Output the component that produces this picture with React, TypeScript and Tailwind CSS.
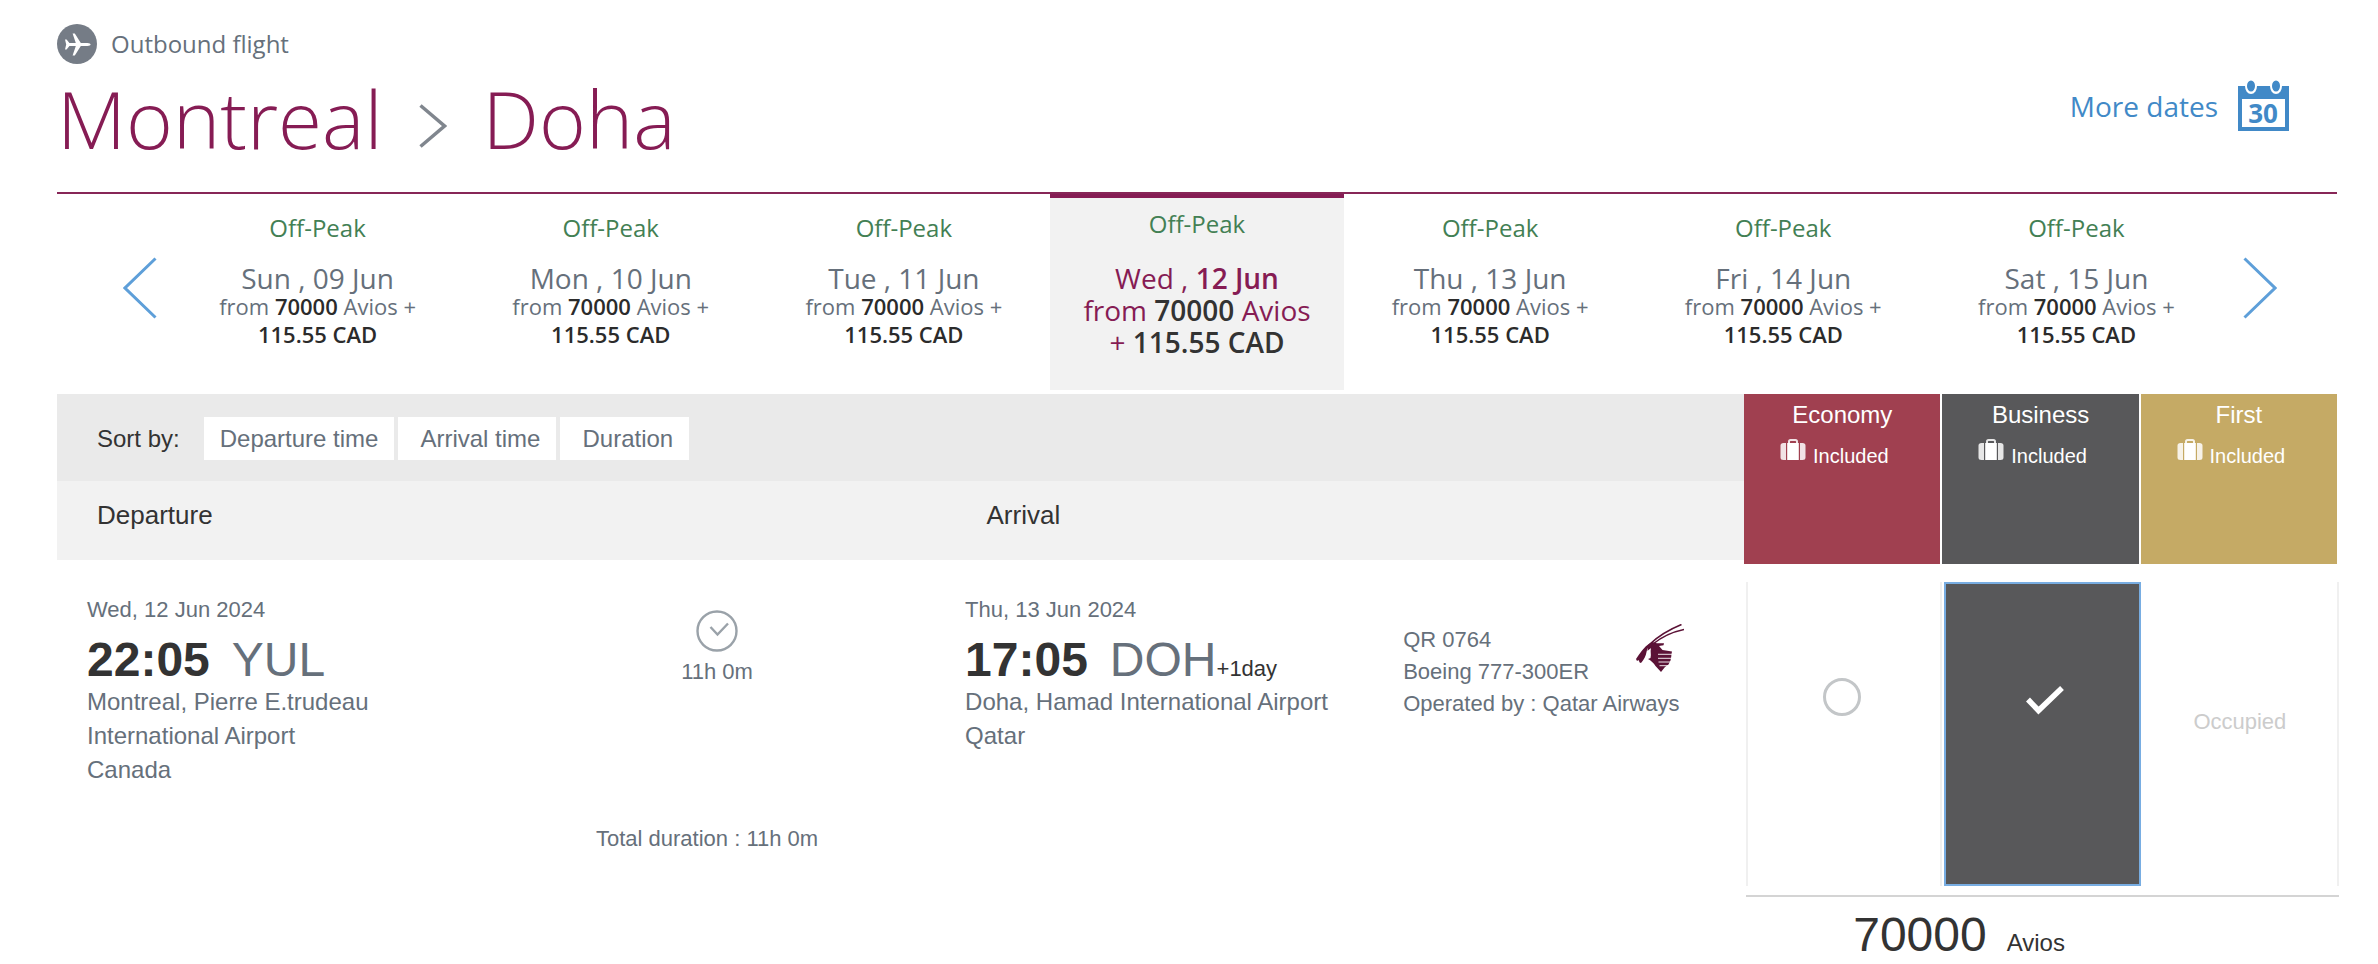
import React, { useState } from 'react';
import clsx from 'clsx';

interface Day {
  weekday: string;
  date: string;
}

interface Cabin {
  id: string;
  name: string;
  headerClass: string;
  available: boolean;
}

const days: Day[] = [
  { weekday: 'Sun', date: '09 Jun' },
  { weekday: 'Mon', date: '10 Jun' },
  { weekday: 'Tue', date: '11 Jun' },
  { weekday: 'Wed', date: '12 Jun' },
  { weekday: 'Thu', date: '13 Jun' },
  { weekday: 'Fri', date: '14 Jun' },
  { weekday: 'Sat', date: '15 Jun' },
];

const cabins: Cabin[] = [
  {
    id: 'economy',
    name: 'Economy',
    headerClass: 'bg-[#a04050]',
    available: true,
  },
  {
    id: 'business',
    name: 'Business',
    headerClass: 'bg-[#58585a]',
    available: true,
  },
  {
    id: 'first',
    name: 'First',
    headerClass: 'bg-[#c5aa65]',
    available: false,
  },
];

const sortOptions = ['Departure time', 'Arrival time', 'Duration'];

const PlaneIcon = () => (
  <svg viewBox="0 0 40 40" className="size-10" aria-hidden="true">
    <circle cx="20" cy="20" r="20" fill="#757c86" />
    <path
      fill="#fff"
      d="M8 15.5h1.6l2.8 3.4 6.4.1L15.6 9.5h2.2l6 9.5 6.6.1c2 .1 3.2.7 3.2 1.4s-1.2 1.3-3.2 1.4l-6.6.1-6 9.5h-2.2l3.2-9.5-6.4.1-2.8 3.4H8l1.2-5z"
    />
  </svg>
);

const CalendarIcon = () => (
  <svg viewBox="0 0 51 52" className="h-[52px] w-[51px]" aria-hidden="true">
    <path fill="#4189c7" d="M0 6h51v45H0z" />
    <path fill="#fff" d="M4 19h43v28H4z" />
    <ellipse cx="13" cy="6" rx="6" ry="8" fill="#fff" />
    <ellipse cx="38" cy="6" rx="6" ry="8" fill="#fff" />
    <ellipse cx="13" cy="6" rx="4" ry="5.500" fill="#4189c7" />
    <ellipse cx="38" cy="6" rx="4" ry="5.500" fill="#4189c7" />
    <text
      x="25"
      y="43"
      textAnchor="middle"
      fill="#4189c7"
      className="font-['Open_Sans',sans-serif] text-[26px] font-bold"
    >
      30
    </text>
  </svg>
);

const SuitcaseIcon = () => (
  <svg viewBox="0 0 26 22" className="h-[22px] w-[26px]" aria-hidden="true">
    <path
      fill="#fff"
      fillOpacity=".85"
      d="M3.500 4H6v17H3.500Q.5 21 .5 18.500v-12Q.5 4 3.500 4zM20 4h2.500q3 0 3 2.500v12q0 2.500-3 2.500H20z"
    />
    <path fill="#fff" d="M7.200 4h11.600v17H7.200z" />
    <path
      d="M9 4V2.500Q9 1 10.500 1h5Q17 1 17 2.500V4"
      fill="none"
      stroke="#fff"
      strokeWidth="2"
      strokeOpacity=".85"
    />
  </svg>
);

const ClockIcon = () => (
  <svg
    viewBox="0 0 42 42"
    className="size-[42px]"
    fill="none"
    stroke="#9aa2a9"
    aria-hidden="true"
  >
    <circle cx="21" cy="21" r="19.500" strokeWidth="2.400" />
    <path d="M14.500 17l7 7.500L32 13.500" strokeWidth="2.400" />
  </svg>
);

const AirlineLogo = () => (
  <svg viewBox="0 0 48 48" className="size-12" role="img" aria-label="Oryx">
    <g fill="none" stroke="#5b1236">
      <path d="M14 20C22 12.500 32 6 45.500.500" strokeWidth="1.600" />
      <path d="M17 20C25 13.500 36 8 48 5.500" strokeWidth="1.600" />
    </g>
    <g fill="#5b1236">
      <path d="M14 19C8 23 4 29 0 35l1 2 1.500-1 1.500 3 1.500-.500C8 35 10 32 10.500 28c.500-3 2-5 3-7z" />
      <path d="M12 21l4-3 5 1.300h7l-.5 1.900-4.500.8 3.500 4 9.500 1.500-.5 2.500-.3 3-.7 3.500-2 4L29 43l-4 5-5.500-6c-2-3-4.500-5.500-7.500-7l2.500-1c1-4-.500-6 .500-10-1 1-2 1.500-3.500 3z" />
    </g>
    <path
      d="M22 30.300h15M22 34.300h14M22.500 38h12.500M23.500 41.700h9"
      stroke="#fff"
      strokeWidth=".9"
      fill="none"
    />
  </svg>
);

const CheckIcon = () => (
  <svg viewBox="0 0 40 32" className="h-8 w-10" aria-hidden="true">
    <path
      d="M3 15.500l10.500 11L37 4"
      fill="none"
      stroke="#fff"
      strokeWidth="5.500"
    />
  </svg>
);

interface DayTabProps {
  day: Day;
  selected: boolean;
  onSelect: () => void;
}

const DayTab = ({ day, selected, onSelect }: DayTabProps): JSX.Element => {
  const strong = selected ? 'text-[#333333]' : 'text-[#2b2b2b]';

  return (
    <button
      type="button"
      aria-pressed={selected}
      onClick={onSelect}
      className={clsx(
        'flex min-h-[196px] flex-col items-center',
        selected
          ? 'border-t-4 border-[#861c54] bg-[#f2f2f2] pt-2.5 text-[28px] leading-8 text-[#861c54]'
          : 'pt-[18px] text-[22px] leading-7 text-[#66707b]'
      )}
    >
      <span className="text-2xl leading-8 text-[#438054]">Off-Peak</span>
      <span
        className={clsx(
          'text-[28px]',
          selected ? 'mt-[22px] leading-8' : 'mt-5 leading-7'
        )}
      >
        {day.weekday} ,{' '}
        <span className={selected ? 'font-semibold' : 'font-normal'}>
          {day.date}
        </span>
      </span>
      <span>
        from <b className={clsx('font-semibold', strong)}>70000</b> Avios
        {selected ? null : ' +'}
      </span>
      <span>
        {selected ? '+ ' : null}
        <b className={clsx('font-semibold', strong)}>115.55 CAD</b>
      </span>
    </button>
  );
};

interface StopProps {
  date: string;
  time: string;
  code: string;
  airport: string;
  country: string;
  note?: string;
}

const Stop = ({
  date,
  time,
  code,
  airport,
  country,
  note,
}: StopProps): JSX.Element => (
  <div className="pt-3">
    <p className="text-[22px] leading-8">{date}</p>
    <p className="mt-[9px] flex items-baseline text-5xl leading-[50px]">
      <b className="text-[#333333]">{time}</b>
      <span className="ml-[22px]">{code}</span>
      {note ? (
        <span className="text-[22px] leading-6 text-[#333333]">{note}</span>
      ) : null}
    </p>
    <p className="max-w-96 text-2xl leading-[34px]">{airport}</p>
    <p className="text-2xl leading-[34px]">{country}</p>
  </div>
);

const App = (): JSX.Element => {
  const [selectedDate, setSelectedDate] = useState('12 Jun');
  const [selectedCabin, setSelectedCabin] = useState('business');

  return (
    <main className="bg-white pr-[41px] pl-[57px] font-['Liberation_Sans',Arial,sans-serif] text-[#66707b]">
      <header className="flex items-start justify-between border-b-2 border-[#872657] pt-6 pb-5 font-['Open_Sans',sans-serif]">
        <div>
          <div className="flex items-center gap-3.5">
            <PlaneIcon />
            <p className="text-2xl leading-10">Outbound flight</p>
          </div>
          <h1 className="flex items-center text-[80px] leading-[108px] font-light text-[#861c54]">
            Montreal
            <svg
              viewBox="0 0 28 44"
              className="mx-9 mt-4 h-11 w-7"
              fill="none"
              aria-hidden="true"
            >
              <path
                d="M1.500 1.500L25.500 22l-24 20.500"
                stroke="#80868e"
                strokeWidth="3.500"
              />
            </svg>
            Doha
          </h1>
        </div>
        <a
          href="#dates"
          className="mt-14 mr-12 flex items-center gap-5 text-[28px] text-[#4189c7]"
        >
          More dates
          <CalendarIcon />
        </a>
      </header>

      <nav
        id="dates"
        aria-label="Departure dates"
        className="mb-1 flex font-['Open_Sans',sans-serif]"
      >
        <button
          type="button"
          aria-label="Previous dates"
          className="flex w-[5%] items-center justify-end pr-3.5 pb-2"
        >
          <svg viewBox="0 0 34 62" className="h-[62px] w-[34px]" fill="none">
            <path
              d="M32.500 1.500L2 31l30.500 29.500"
              stroke="#5e9fd9"
              strokeWidth="3"
            />
          </svg>
        </button>
        <div className="grid flex-1 grid-cols-7">
          {days.map((day) => (
            <DayTab
              key={day.date}
              day={day}
              selected={day.date === selectedDate}
              onSelect={() => setSelectedDate(day.date)}
            />
          ))}
        </div>
        <button
          type="button"
          aria-label="Next dates"
          className="flex w-[5%] items-center pb-2 pl-5"
        >
          <svg viewBox="0 0 34 62" className="h-[62px] w-[34px]" fill="none">
            <path
              d="M1.500 1.500L32 31 1.500 60.500"
              stroke="#5e9fd9"
              strokeWidth="3"
            />
          </svg>
        </button>
      </nav>

      <div className="flex items-start">
        <div className="flex-1 text-[#333333]">
          <div className="flex items-center gap-1 bg-[#eaeaea] pt-[23px] pb-[21px] pl-10 text-2xl leading-[43px]">
            <span className="mr-5 whitespace-nowrap">Sort by:</span>
            {sortOptions.map((option) => (
              <button
                key={option}
                type="button"
                className="bg-white pr-4 pl-[22px] text-[#66707b] nth-[2]:pl-4"
              >
                {option}
              </button>
            ))}
          </div>
          <div className="flex bg-[#f2f2f2] pt-[13px] pb-[23px] pl-10 text-[26px] leading-[43px]">
            <h2 className="w-[54%]">Departure</h2>
            <h2>Arrival</h2>
          </div>
        </div>
        <div className="grid w-[26%] grid-cols-3 gap-0.5 text-white">
          {cabins.map((cabin) => (
            <div
              key={cabin.id}
              className={clsx(
                'flex min-h-[170px] flex-col items-center pt-[5px]',
                cabin.headerClass
              )}
            >
              <h3 className="text-2xl leading-8">{cabin.name}</h3>
              <p className="mt-2 flex items-start gap-[7px] pr-4 text-xl leading-[34px]">
                <SuitcaseIcon />
                Included
              </p>
            </div>
          ))}
        </div>
      </div>

      <section className="mt-[18px] flex items-start">
        <div className="grid flex-1 grid-cols-[382fr_496fr_438fr_341fr] pl-[30px]">
          <Stop
            date="Wed, 12 Jun 2024"
            time="22:05"
            code="YUL"
            airport="Montreal, Pierre E.trudeau International Airport"
            country="Canada"
          />
          <div className="flex flex-col items-center pt-7 text-[22px] leading-8">
            <ClockIcon />
            <p className="mt-1">11h 0m</p>
            <p className="mt-[135px] pr-5">Total duration : 11h 0m</p>
          </div>
          <Stop
            date="Thu, 13 Jun 2024"
            time="17:05"
            code="DOH"
            airport="Doha, Hamad International Airport"
            country="Qatar"
            note="+1day"
          />
          <div className="pt-[42px] text-[22px] leading-8">
            <div className="flex justify-between pr-[60px]">
              <div>
                <p>QR 0764</p>
                <p>Boeing 777-300ER</p>
              </div>
              <AirlineLogo />
            </div>
            <p>Operated by : Qatar Airways</p>
          </div>
        </div>

        <div className="-mr-0.5 ml-0.5 w-[26%]">
          <div className="grid grid-cols-3 gap-0.5">
            {cabins.map((cabin) => {
              if (!cabin.available) {
                return (
                  <div
                    key={cabin.id}
                    className="min-h-[304px] border-r-2 border-[#f0f0f0] pt-[124px] text-center text-[22px] leading-8 text-[#cccccc]"
                  >
                    Occupied
                  </div>
                );
              }

              const checked = cabin.id === selectedCabin;
              return (
                <label
                  key={cabin.id}
                  className={clsx(
                    'relative flex min-h-[304px] cursor-pointer justify-center pt-24',
                    checked
                      ? 'border-2 border-[#78ade2] bg-[#58585a]'
                      : 'border-x-2 border-[#f0f0f0] pr-1'
                  )}
                >
                  <input
                    type="radio"
                    name="cabin"
                    aria-label={cabin.name}
                    checked={checked}
                    onChange={() => setSelectedCabin(cabin.id)}
                    className={
                      checked
                        ? 'sr-only'
                        : 'size-[38px] appearance-none rounded-full border-[3px] border-[#c3c6c8]'
                    }
                  />
                  {checked ? (
                    <span className="pt-1 pl-1">
                      <CheckIcon />
                    </span>
                  ) : null}
                </label>
              );
            })}
          </div>
          <p className="mt-[9px] flex items-baseline gap-5 border-t-2 border-[#d4d4d4] pt-2.5 pl-[107px] text-5xl leading-[56px] text-[#333333]">
            70000 <span className="text-2xl">Avios</span>
          </p>
        </div>
      </section>
    </main>
  );
};

export default App;
